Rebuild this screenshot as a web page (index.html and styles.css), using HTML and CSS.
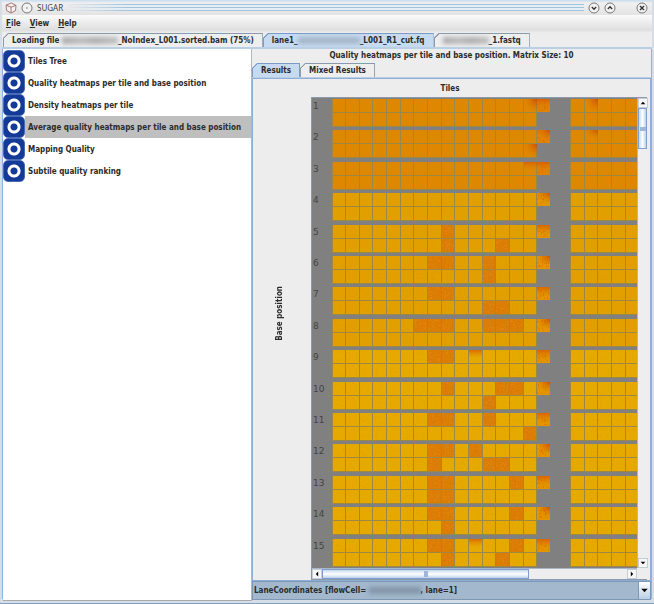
FILE: index.html
```html
<!DOCTYPE html>
<html lang="en">
<head>
<meta charset="utf-8">
<title>SUGAR</title>
<link rel="stylesheet" href="styles.css">
</head>
<body>
<div class="window">
  <header class="titlebar">
    <svg class="cube" viewBox="0 0 12 12" aria-hidden="true"><path d="M1 3.2 6.2 1l4.8 2.4-.5 5.2L6 11 1.6 8.6zM1 3.2l5 2 5-1.8M6 5.2V11"/></svg>
    <svg class="round" viewBox="0 0 12 12" aria-hidden="true"><circle cx="6" cy="6" r="5"/><circle class="dot" cx="6" cy="6" r=".8"/></svg>
    <h1>SUGAR</h1>
    <div class="stripes"></div>
    <button class="winbtn" aria-label="Minimize"><svg viewBox="0 0 12 12"><circle cx="6" cy="6" r="5"/><path d="m3.8 5 2.2 2.2L8.200 5"/></svg></button>
    <button class="winbtn" aria-label="Maximize"><svg viewBox="0 0 12 12"><circle cx="6" cy="6" r="5"/><path d="M3.800 7 6 4.800 8.200 7"/></svg></button>
    <button class="winbtn close" aria-label="Close"><svg viewBox="0 0 12 12"><circle cx="6" cy="6" r="5"/><path d="m4 4 4 4M8 4 4 8"/></svg></button>
  </header>
  <nav class="menubar">
    <button><u>F</u>ile</button><button><u>V</u>iew</button><button><u>H</u>elp</button>
  </nav>
  <div class="tabs files">
    <button class="tab">Loading file <span class="smudge"></span>_NoIndex_L001.sorted.bam (75%)</button>
    <button class="tab active">lane1_<span class="smudge wide"></span>_L001_R1_cut.fq</button>
    <button class="tab"><span class="smudge short"></span>_1.fastq</button>
  </div>
  <main class="split">
    <ul class="list">
      <li><button><i class="ring"></i><span>Tiles Tree</span></button></li>
      <li><button><i class="ring"></i><span>Quality heatmaps per tile and base position</span></button></li>
      <li><button><i class="ring"></i><span>Density heatmaps per tile</span></button></li>
      <li><button class="selected"><i class="ring"></i><span>Average quality heatmaps per tile and base position</span></button></li>
      <li><button><i class="ring"></i><span>Mapping Quality</span></button></li>
      <li><button><i class="ring"></i><span>Subtile quality ranking</span></button></li>
    </ul>
    <section class="viewer">
      <h2>Quality heatmaps per tile and base position. Matrix Size: 10</h2>
      <div class="tabs inner">
        <button class="tab active">Results</button>
        <button class="tab">Mixed Results</button>
      </div>
      <div class="results">
        <h3>Tiles</h3>
        <div class="axis"><span>Base position</span></div>
        <div class="scrollpane">
          <div class="viewport"><svg id="heatmap" width="326" height="470" role="img" aria-label="Quality heatmap"></svg></div>
          <div class="bar vertical">
            <button aria-label="Scroll up"><svg viewBox="0 0 10 10"><path d="M2 6.500h6L5 3.500z"/></svg></button>
            <div class="track"><div class="thumb"></div></div>
            <button aria-label="Scroll down"><svg viewBox="0 0 10 10"><path d="M2 3.500h6L5 6.500z"/></svg></button>
          </div>
          <div class="bar horizontal">
            <button aria-label="Scroll left"><svg viewBox="0 0 10 10"><path d="M6.500 2v6L3.500 5z"/></svg></button>
            <div class="track"><div class="thumb"></div></div>
            <button aria-label="Scroll right"><svg viewBox="0 0 10 10"><path d="M3.500 2v6l3-3z"/></svg></button>
          </div>
        </div>
      </div>
      <div class="lane">
        <select aria-label="Lane"><option>LaneCoordinates [flowCell=&emsp;&emsp;&emsp;&emsp;&emsp;&emsp;&emsp;&ensp;, lane=1]</option></select>
        <span class="smudge over"></span>
        <svg class="arrow" viewBox="0 0 12 18" aria-hidden="true"><path d="M2.500 7h7L6 11z"/></svg>
      </div>
    </section>
  </main>
</div>
<script src="heatmap.js"></script>
</body>
</html>
```
FILE: styles.css
```css
* { box-sizing: border-box; }
body {
  margin: 0;
  font: bold 8px/12px "DejaVu Sans Condensed", "Noto Sans", sans-serif;
  color: #2b2b2b;
  background: #ededed;
}
button, select { font: inherit; color: inherit; border: 0; padding: 0; margin: 0; background: none; white-space: nowrap; }
h1, h2, h3 { margin: 0; font: inherit; }
svg { display: block; }

.window {
  height: 100vh;
  display: flex;
  flex-direction: column;
  padding: 0 2px 4px;
  background: #d5dde6;
  border-bottom: 1px solid #7f9fbd;
}
.titlebar {
  height: 15px;
  flex: none;
  display: flex;
  align-items: center;
  gap: 4px;
  padding: 0 4px 0 3px;
  background: linear-gradient(#c5dcef, #f0f0f0 3px, #e3e3e3);
}
.titlebar h1 { font: 8px/12px "Noto Sans", sans-serif; color: #444; }
.titlebar svg { width: 12px; height: 12px; fill: #f3f3f3; stroke: #777; stroke-width: 1; }
.titlebar .cube { stroke: #a77777; }
.titlebar .dot { fill: #777; stroke: none; }
.titlebar .winbtn path { fill: none; stroke: #333; stroke-width: 1.4; }
.winbtn.close { margin-left: 16px; }
.stripes {
  flex: 1;
  height: 7px;
  background:
    linear-gradient(90deg, #e9e9e9, transparent 60px),
    repeating-linear-gradient(#a3c3dc 0 1px, #e4eef5 1px 3px);
}
.menubar {
  height: 18px;
  flex: none;
  display: flex;
  align-items: center;
  gap: 9px;
  padding: 0 4px;
  background: linear-gradient(#fbfbfb, #dedede 15px, #eee);
}

.tabs { display: flex; flex: none; }
.tab {
  height: 14px;
  padding: 1px 8px 0;
  border: 1px solid #8a9aad;
  border-bottom: 0;
  background: linear-gradient(135deg, #8a9aad 3px, #eee 3px);
  clip-path: polygon(5px 0, 100% 0, 100% 100%, 0 100%, 0 5px);
}
.tab.active { border-color: #7a9bc4; background: linear-gradient(135deg, #7a9bc4 3px, #c6dbf1 3px); }
.files { background: #ededed; padding: 0 1px; border-bottom: 2px solid #b8cfe5; }
.smudge {
  display: inline-block;
  width: 56px;
  height: 7px;
  vertical-align: middle;
  background: linear-gradient(90deg, #aaa, #bbb 35%, #adadad 60%, #c0c0c0);
  filter: blur(2px);
}
.smudge.wide { width: 62px; background: #a5b6c9; }
.smudge.short { width: 46px; }

.split {
  flex: 1;
  min-height: 0;
  display: grid;
  grid-template-columns: 249px minmax(0, 1fr);
  border: 1px solid #91b2df;
  border-top: 0;
  background: #ededed;
}
.list { list-style: none; margin: 0; padding: 1px 0 0; background: #fff; border-right: 1px solid #b0b8c2; border-bottom: 1px solid #aaa; overflow: hidden; }
.list button { display: flex; width: 100%; height: 22px; text-align: left; align-items: center; }
.list span { flex: 1; line-height: 20px; padding: 2px 0 0 3px; }
.list .selected span { background: #bfbfbf; }
.ring {
  width: 22px;
  height: 22px;
  border-radius: 5px;
  border: 1px solid #496bb2;
  background: radial-gradient(circle, #123a96 3px, #fff 4px 6px, #123a96 7px);
}
.viewer { display: flex; flex-direction: column; min-width: 0; padding-bottom: 1px; }
.viewer h2 { text-align: center; line-height: 14px; flex: none; }
.inner { border-bottom: 1px solid #b8cfe5; }
.results {
  flex: 1;
  min-height: 0;
  display: grid;
  grid-template: 18px minmax(0, 1fr) / 58px minmax(0, 1fr);
  padding-right: 3px;
  border: 1px solid #8eaed8;
}
.results h3 { grid-column: 1 / 3; text-align: center; line-height: 20px; }
.axis { display: grid; place-items: center; padding: 0 4px 50px 0; }
.axis span { writing-mode: vertical-rl; transform: rotate(180deg); }
.scrollpane {
  display: grid;
  grid-template: minmax(0, 1fr) 11px / minmax(0, 1fr) 10px;
  border: 1px solid #8b99a8;
  border-right: 0;
}
.viewport { overflow: hidden; background: #808080; }
#heatmap text { font: 9px "DejaVu Sans", sans-serif; fill: #444; }
.bar { display: flex; background: #eee; }
.bar button { width: 10px; height: 10px; background: #f7f7f7; border: 1px solid #c5ccd4; flex: none; }
.bar svg { width: 8px; height: 8px; overflow: visible; }
.track { flex: 1; display: flex; }
.thumb { border: 1px solid #7e9dd0; display: grid; place-items: center; }
.thumb::after { content: ""; background: #9fb5dc; }
.vertical { flex-direction: column; border-left: 1px solid #a9b7c6; }
.vertical .thumb { width: 100%; height: 41px; background: linear-gradient(90deg, #c5d9f0, #fff, #bdd2ea); }
.vertical .thumb::after { width: 6px; height: 4px; }
.horizontal { border-top: 1px solid #a9b7c6; }
.horizontal .thumb { width: 68%; background: linear-gradient(#c5d9f0, #fff, #bdd2ea); }
.horizontal .thumb::after { width: 4px; height: 6px; }
.lane { position: relative; height: 19px; flex: none; border: 1px solid #7c98b5; background: #a3b8cc; }
.lane select { appearance: none; width: 100%; height: 100%; padding: 0 14px 0 1px; }
.over { position: absolute; left: 116px; top: 5px; width: 52px; background: #8496a9; }
.arrow { position: absolute; right: 0; top: 0; width: 12px; height: 17px; background: linear-gradient(#fff, #b8cfe5); pointer-events: none; border-left: 1px solid #7c98b5; }
```
FILE: heatmap.js
```js
const svg = document.getElementById("heatmap");
const CELL = 13.65, PITCH = 31.4, LEFT = 20.5, TOP = 1, SECOND = 259;

// Low-quality cells for each base position: [upper row columns, lower row columns]
const hot = {
  5: [[8], [8, 12]],
  6: [[7, 8, 11], [11]],
  7: [[7, 8], [11, 12]],
  8: [[6, 7, 8, 11, 12, 13], []],
  9: [[7, 8], []],
  10: [[8, 12, 13], [11]],
  11: [[7, 8, 11], [14]],
  12: [[7, 8, 10], [7, 11, 12]],
  13: [[7, 8, 13], [7, 8]],
  14: [[7, 8, 13], [8]],
  15: [[7, 8, 13], [8, 12]]
};

let seed = 7;
const rnd = () => (seed = (seed * 16807) % 2147483647) / 2147483647;

function add(tag, attrs, text) {
  const el = document.createElementNS("http://www.w3.org/2000/svg", tag);
  for (const k in attrs) el.setAttribute(k, attrs[k]);
  if (text) el.textContent = text;
  svg.appendChild(el);
  return el;
}

function speckle(x, y, count, color, opacity) {
  let d = "";
  for (let i = 0; i < count; i++) {
    d += `M${x + Math.floor(rnd() * 12)} ${y + Math.floor(rnd() * 12)}h1v1h-1z`;
  }
  add("path", { d, fill: color, opacity });
}

function cell(x, y, base, isHot) {
  const x0 = Math.round(x), y0 = Math.round(y);
  const w = Math.round(x + CELL) - x0 - 1;
  add("rect", { x: x0, y: y0, width: w, height: 13, fill: isHot ? "#db7d05" : base });
  speckle(x0, y0, isHot ? 35 : 12, isHot ? "#e58b16" : "#d98500", isHot ? 0.5 : 0.16);
}

function stain(x, y, w, h, corner) {
  add("rect", { x: Math.round(x), y: Math.round(y), width: w, height: h, fill: `url(#${corner})` });
}

svg.innerHTML = `<defs>
  <radialGradient id="tr" cx="1" cy="0" r="1"><stop stop-color="#cf4300" stop-opacity=".85"/><stop offset="1" stop-color="#d97000" stop-opacity="0"/></radialGradient>
  <linearGradient id="top" x2="0" y2="1"><stop stop-color="#d65800" stop-opacity=".75"/><stop offset="1" stop-color="#dc8000" stop-opacity="0"/></linearGradient>
</defs>`;

for (let n = 1; n <= 15; n++) {
  const y = TOP + (n - 1) * PITCH;
  const base = n < 4 ? "#de8700" : n < 6 ? "#e2a000" : n < 9 ? "#e29f00" : "#e6a900";
  add("rect", { x: 20, y: Math.round(y), width: 205, height: 28, fill: "#9a8848" });
  add("rect", { x: SECOND - 1, y: Math.round(y), width: 80, height: 28, fill: "#9a8848" });
  for (let r = 0; r < 2; r++) {
    for (let c = 0; c < 15; c++) {
      cell(LEFT + c * CELL, y + r * 14, base, hot[n] && hot[n][r].includes(c));
    }
    for (let c = 0; c < 5; c++) cell(SECOND + c * CELL, y + r * 14, base, false);
  }
  const last = LEFT + 15 * CELL;
  cell(last, y, n < 4 ? "#e08206" : "#e29500", false);
  stain(last, y, 13, 10, n % 2 ? "top" : "tr");
  speckle(Math.round(last), Math.round(y), 22, "#d85b00", 0.5);
  add("text", { x: 1, y: Math.round(y) + 10 }, String(n));
}

// Local artefacts
stain(LEFT + 14 * CELL, TOP, 13, 13, "tr");
stain(LEFT + 14 * CELL, TOP + PITCH + 14, 13, 13, "tr");
stain(LEFT + 14 * CELL, TOP + 2 * PITCH, 13, 8, "top");
stain(SECOND + CELL, TOP, 13, 13, "tr");
stain(SECOND + CELL, TOP + PITCH, 13, 8, "tr");
stain(LEFT + 10 * CELL, TOP + 8 * PITCH, 13, 8, "top");
stain(LEFT + 10 * CELL, TOP + 14 * PITCH, 13, 8, "top");
```
